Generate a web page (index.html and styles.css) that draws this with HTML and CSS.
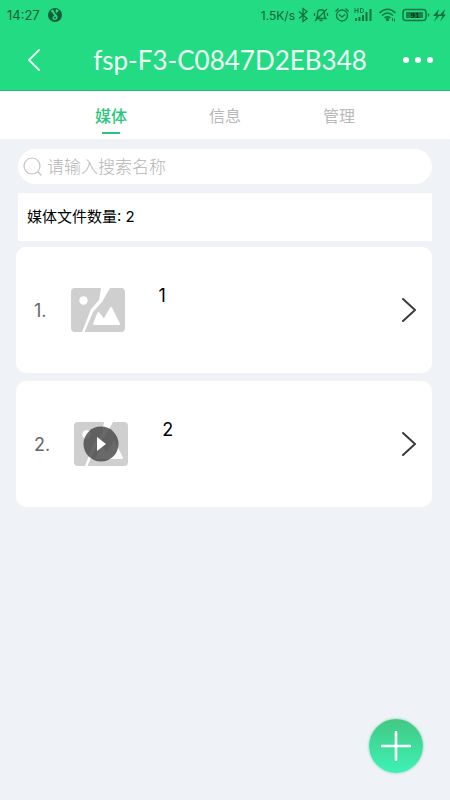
FILE: index.html
```html
<!DOCTYPE html>
<html lang="zh-CN">
<head>
<meta charset="utf-8">
<meta name="viewport" content="width=device-width, initial-scale=1">
<title>fsp-F3-C0847D2EB348</title>
<link rel="stylesheet" href="styles.css">
</head>
<body>
<svg class="defs" width="0" height="0" aria-hidden="true">
  <symbol id="picture" viewBox="0 0 54 44">
    <path fill="#cfcfcf" d="M4 0H30L28 12L20 21L11 44H4Q0 44 0 40V4Q0 0 4 0Z"/>
    <path fill="#cfcfcf" d="M39 0H50Q54 0 54 4V40Q54 44 50 44H13.500L22 24L31 14Z"/>
    <circle cx="12.500" cy="12.500" r="4.200" fill="#fff"/>
    <path fill="#fff" stroke="#fff" stroke-width="2" stroke-linejoin="round" d="M23 36L27.500 25L33 32L40 20L48 36Z"/>
  </symbol>
  <symbol id="chevron" viewBox="0 0 14 24">
    <path d="M1 1L13 12L1 23" fill="none" stroke="#3c3c3c" stroke-width="2" stroke-linecap="round" stroke-linejoin="round"/>
  </symbol>
</svg>
<header class="header">
  <div class="status">
    <span class="time">14:27</span>
    <svg class="app" width="14" height="14" viewBox="0 0 14 14" aria-hidden="true">
      <circle cx="7" cy="7" r="7" fill="#125f38"/>
      <path fill="#23db82" d="M2.500 2.800L5 1.500L6.500 4.500L8 6.500C10.500 8 10 12 7 12C4 12 3.500 8.500 6.500 8L5 5.500ZM8 1L11 2.500L8.500 5L7.500 4Z"/>
      <circle cx="7" cy="9.800" r="1" fill="#125f38"/>
    </svg>
    <span class="speed">1.5K/s</span>
    <svg class="icons" width="148" height="18" viewBox="298 6 148 18" fill="none" stroke="#14733f" stroke-width="1.300" aria-hidden="true">
      <path d="M299 11.500L307 18.500L303 21.500V8.500L307 11.500L299 18.500"/>
      <path d="M316 18.500H326L324.500 16.500V13.500C324.500 8.500 317.500 8.500 317.500 13.500V16.500L316 18.500M319.500 20.500H322.500M327 9L315 21M314.500 13V16M327.500 13V16"/>
      <circle cx="342" cy="15.500" r="5.500"/>
      <path d="M339 14.500L342 17L345 14.500M335.500 11.500L338.500 8.500M345.500 8.500L348.500 11.500"/>
      <path stroke-width="2" d="M356 18V21M359.500 17V21M363 15V21M366.500 12V21M370.500 9V21"/>
      <path stroke-width="1" d="M355 8V13M358 8V13M355 10.500H358M360.500 8.500V12.500H362C364 12.500 364 8.500 362 8.500Z"/>
      <path stroke-width="1.600" d="M379.500 13Q387.500 5.500 395.500 13M382 15.500Q387.500 10.500 393 15.500M384.500 18Q387.500 15.500 390.500 18"/>
      <circle cx="387.500" cy="19.500" r="1" fill="#14733f"/>
      <path stroke-width="1" d="M392.500 18V21M394.500 18.500V21.500"/>
      <rect x="403" y="9.500" width="23" height="11" rx="3" stroke-width="1.500"/>
      <rect x="406" y="12" width="17" height="6" fill="#14854a" stroke="none"/>
      <path d="M428.500 13.500V16.500"/>
      <text x="415" y="18" text-anchor="middle" class="level">91</text>
      <path fill="#14733f" stroke="none" d="M439 9L433 16H436.500L434 21.500L440.500 14.500H437.500ZM445 9L439 16H442.500L440 21.500L446 14.500H443.500Z"/>
    </svg>
  </div>
  <div class="bar">
    <button class="back" aria-label="返回"><svg width="12" height="22" viewBox="0 0 12 22"><path d="M11 1L1 11L11 21" fill="none" stroke="#effff7" stroke-width="1.800" stroke-linecap="round"/></svg></button>
    <h1 class="title">fsp-F3-C0847D2EB348</h1>
    <button class="more" aria-label="更多"><svg width="32" height="6" viewBox="0 0 32 6" fill="#fff"><circle cx="4" cy="3" r="3"/><circle cx="16" cy="3" r="3"/><circle cx="28" cy="3" r="3"/></svg></button>
  </div>
</header>
<nav class="tabs">
  <a class="tab active" href="#media" aria-current="page">媒体</a>
  <a class="tab" href="#info">信息</a>
  <a class="tab" href="#manage">管理</a>
</nav>
<main class="main">
  <label class="search">
    <svg width="20" height="20" viewBox="0 0 20 20" fill="none" stroke="#c4c4c4" stroke-width="1.200" aria-hidden="true"><circle cx="9" cy="9" r="8"/><path d="M15 15L18.500 18.500"/></svg>
    <input type="search" placeholder="请输入搜索名称" aria-label="请输入搜索名称">
  </label>
  <p class="count">媒体文件数量: 2</p>
  <ol class="list">
    <li><a class="card" href="#1">
      <span class="index">1.</span>
      <span class="thumb"><svg width="54" height="44"><use href="#picture"/></svg></span>
      <span class="name">1</span>
      <svg class="arrow" width="14" height="24"><use href="#chevron"/></svg>
    </a></li>
    <li><a class="card" href="#2">
      <span class="index">2.</span>
      <span class="thumb"><svg width="54" height="44"><use href="#picture"/></svg>
        <svg class="play" width="36" height="36" viewBox="0 0 36 36"><circle cx="18" cy="18" r="17.500" fill="#444" fill-opacity=".8"/><path d="M14 11L23 18L14 25Z" fill="#fff"/></svg></span>
      <span class="name">2</span>
      <svg class="arrow" width="14" height="24"><use href="#chevron"/></svg>
    </a></li>
  </ol>
</main>
<button class="add" aria-label="添加"><svg width="30" height="30" viewBox="0 0 30 30"><path d="M15 1V29M1 15H29" stroke="#fff" stroke-width="2.600" stroke-linecap="round"/></svg></button>
</body>
</html>
```
FILE: styles.css
```css
* { box-sizing: border-box; }
body {
  margin: 0;
  min-height: 100vh;
  background: #eff3f8;
  color: #000;
  font-family: Inter, "Noto Sans CJK SC", sans-serif;
}
button { border: 0; padding: 0; background: none; cursor: pointer; }
svg { display: block; flex: none; }
a { color: inherit; text-decoration: none; }
.defs { position: absolute; }
.header { background: #23db82; border-bottom: 1px solid #20bd73; }
.status {
  display: flex;
  align-items: center;
  height: 30px;
  padding: 0 4px 0 7px;
  color: #125f38;
  font-size: 13px;
}
.app { margin-left: 8px; }
.speed { margin-left: auto; margin-right: 3px; font-size: 12px; }
.level { font: bold 8px "Liberation Sans", sans-serif; fill: #042a16; stroke: none; }
.bar {
  display: flex;
  align-items: center;
  justify-content: space-between;
  height: 60px;
  padding: 0 16px 0 28px;
}
.back { display: flex; }
.more { display: flex; }
.title {
  margin: 0;
  padding-left: 18px;
  color: #effff7;
  font-family: Lato, sans-serif;
  font-size: 26px;
  font-weight: 400;
}
.tabs { display: flex; height: 48px; padding: 0 54px; background: #fff; }
.tab {
  display: flex;
  flex: 1;
  flex-direction: column;
  align-items: center;
  padding-top: 13px;
  color: #b9b9b9;
  font-size: 16px;
  line-height: 24px;
}
.active { color: #2bc57c; font-weight: 500; }
.active::after { content: ""; width: 18px; height: 2px; margin-top: 4px; background: #2bc57c; }
.main { padding: 10px 18px; }
.search {
  display: flex;
  align-items: center;
  gap: 4px;
  height: 35px;
  padding: 0 5px;
  border-radius: 18px;
  background: #fff;
}
.search input {
  flex: 1;
  min-width: 0;
  padding: 0;
  border: 0;
  outline: 0;
  background: none;
  font: inherit;
  font-size: 17px;
}
.search input::placeholder { color: #b4b4b4; font-weight: 300; }
.count { margin: 9px 0 6px; padding: 12px 9px; background: #fff; font-size: 15px; line-height: 24px; }
.list { display: grid; gap: 8px; margin: 0 0 0 -2px; padding: 0; list-style: none; }
.card {
  display: flex;
  align-items: center;
  height: 126px;
  padding: 0 16px 0 18px;
  border-radius: 10px;
  background: #fff;
  font-size: 18px;
}
.index { margin-right: 24px; color: #666; }
.thumb { display: grid; place-items: center; margin-right: 34px; }
.thumb > svg { grid-area: 1 / 1; }
.name { align-self: flex-start; padding-top: 37px; line-height: 24px; }
.arrow { margin-left: auto; }
.add {
  position: fixed;
  right: 27px;
  bottom: 27px;
  display: grid;
  place-items: center;
  width: 54px;
  height: 54px;
  border-radius: 50%;
  background: linear-gradient(#42c883, #3df2b5);
  box-shadow: 0 0 3px #8ac9ae;
}
```
